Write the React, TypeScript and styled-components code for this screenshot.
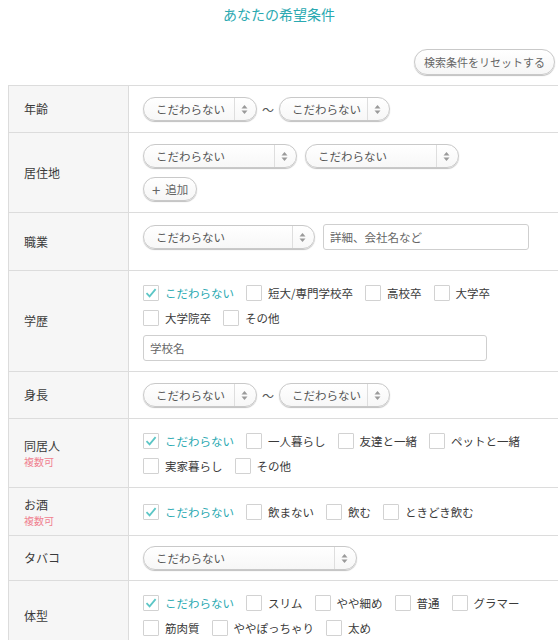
import React from 'react';
import styled, { createGlobalStyle } from 'styled-components';

const GlobalStyle = createGlobalStyle`
  html, body {
    margin: 0;
    padding: 0;
    background: #ffffff;
    overflow-x: hidden;
  }
  body {
    font-family: "Noto Sans CJK JP", "Noto Sans", sans-serif;
    color: #444;
  }
`;

const Page = styled.div`
  padding: 3px 0 0 8px;
`;

const Title = styled.h2`
  margin: 0;
  text-align: center;
  font-size: 14px;
  font-weight: 400;
  color: #2aa9b1;
  line-height: 22px;
  padding-right: 8px;
`;

const ResetRow = styled.div`
  display: flex;
  justify-content: flex-end;
  margin-top: 24px;
  padding-right: 3px;
`;

const PillButton = styled.button<{ $small?: boolean }>`
  font-family: inherit;
  font-size: ${(p) => (p.$small ? '11px' : '11.5px')};
  color: #666;
  background: linear-gradient(#ffffff, #f6f6f6);
  border: 1px solid #c9c9c9;
  border-radius: 14px;
  box-shadow: 0 1px 1px rgba(0, 0, 0, 0.25);
  height: ${(p) => (p.$small ? '26px' : '24px')};
  padding: 0 ${(p) => (p.$small ? '9px' : '8px')};
  display: inline-flex;
  align-items: center;
  gap: 5px;
  cursor: pointer;
`;

const Table = styled.div`
  margin-top: 10px;
  width: 600px;
  border-top: 1px solid #dcdcdc;
  border-left: 1px solid #dcdcdc;
`;

const Row = styled.div`
  display: grid;
  grid-template-columns: 120px 1fr;
  border-bottom: 1px solid #dcdcdc;
`;

const Label = styled.div`
  background: #f6f6f6;
  border-right: 1px solid #dcdcdc;
  padding: 7px 15px;
  display: flex;
  flex-direction: column;
  justify-content: center;
  font-size: 12px;
  color: #3a3a3a;
  line-height: 18px;
`;

const Note = styled.span`
  font-size: 10px;
  color: #f0808f;
  line-height: 14px;
`;

const Content = styled.div<{ $pt?: number; $pb?: number }>`
  padding: ${(p) => p.$pt ?? 11}px 15px ${(p) => p.$pb ?? 11}px 14px;
  display: flex;
  flex-direction: column;
  gap: 9px;
`;

const Line = styled.div`
  display: flex;
  align-items: center;
  gap: 8px;
`;

const Tilde = styled.span`
  font-size: 12px;
  color: #555;
  margin: 0 -3px;
`;

const SelectBox = styled.div<{ $w: number }>`
  width: ${(p) => p.$w}px;
  height: 24px;
  box-sizing: border-box;
  border: 1px solid #c9c9c9;
  border-radius: 13px;
  background: linear-gradient(#ffffff, #f7f7f7);
  box-shadow: 0 1px 1px rgba(0, 0, 0, 0.25);
  display: flex;
  align-items: stretch;
  font-size: 11.5px;
  color: #555;
`;

const SelectText = styled.span`
  flex: 1;
  display: flex;
  align-items: center;
  padding-left: 12px;
  white-space: nowrap;
`;

const SelectArrow = styled.span`
  width: 19px;
  border-left: 1px solid #dedede;
  display: flex;
  align-items: center;
  justify-content: center;
  padding-right: 2px;
`;

const TextInput = styled.input<{ $w: number }>`
  width: ${(p) => p.$w}px;
  height: 26px;
  box-sizing: border-box;
  border: 1px solid #cfcfcf;
  border-radius: 3px;
  font-family: inherit;
  font-size: 11.5px;
  padding: 0 6px;
  color: #555;
  &::placeholder {
    color: #666;
  }
`;

const CheckWrap = styled.div`
  display: flex;
  flex-wrap: wrap;
  column-gap: 12px;
  row-gap: 0;
  max-width: 400px;
`;

const CheckItem = styled.label<{ $on?: boolean }>`
  display: inline-flex;
  align-items: center;
  height: 25px;
  gap: 6px;
  font-size: 11.5px;
  color: ${(p) => (p.$on ? '#2aa9b1' : '#3a3a3a')};
`;

const Box = styled.span`
  width: 14px;
  height: 14px;
  border: 1px solid #d2d2d2;
  border-radius: 1px;
  background: #fff;
  display: inline-flex;
  align-items: center;
  justify-content: center;
`;

const Arrows = () => (
  <svg width="7" height="11" viewBox="0 0 7 11">
    <path d="M3.5 1 L6.5 4.5 L0.5 4.5 Z" fill="#9a9a9a" />
    <path d="M3.5 10 L6.5 6.5 L0.5 6.5 Z" fill="#9a9a9a" />
  </svg>
);

const Select = ({ w }: { w: number }) => (
  <SelectBox $w={w}>
    <SelectText>こだわらない</SelectText>
    <SelectArrow>
      <Arrows />
    </SelectArrow>
  </SelectBox>
);

const Check = ({ label, on }: { label: string; on?: boolean }) => (
  <CheckItem $on={on}>
    <Box>
      {on && (
        <svg width="12" height="10" viewBox="0 0 12 10">
          <path d="M1.5 5.2 L4.6 8.3 L10.6 1.2" fill="none" stroke="#5cc6c6" strokeWidth="1.8" />
        </svg>
      )}
    </Box>
    {label}
  </CheckItem>
);

const Checks = ({ items }: { items: string[] }) => (
  <CheckWrap>
    {items.map((it, i) => (
      <Check key={it} label={it} on={i === 0} />
    ))}
  </CheckWrap>
);

const App = () => {
  return (
    <>
      <GlobalStyle />
      <Page>
        <Title>あなたの希望条件</Title>
        <ResetRow>
          <PillButton $small>検索条件をリセットする</PillButton>
        </ResetRow>
        <Table>
          <Row>
            <Label>年齢</Label>
            <Content>
              <Line>
                <Select w={114} />
                <Tilde>〜</Tilde>
                <Select w={111} />
              </Line>
            </Content>
          </Row>
          <Row>
            <Label>居住地</Label>
            <Content>
              <Line>
                <Select w={154} />
                <Select w={154} />
              </Line>
              <Line>
                <PillButton>
                  <span style={{ fontSize: 15, lineHeight: 1 }}>+</span>追加
                </PillButton>
              </Line>
            </Content>
          </Row>
          <Row>
            <Label>職業</Label>
            <Content $pb={20}>
              <Line>
                <Select w={172} />
                <TextInput $w={206} placeholder="詳細、会社名など" />
              </Line>
            </Content>
          </Row>
          <Row>
            <Label>学歴</Label>
            <Content $pt={9} $pb={10}>
              <Checks items={['こだわらない', '短大/専門学校卒', '高校卒', '大学卒', '大学院卒', 'その他']} />
              <TextInput $w={344} placeholder="学校名" style={{ marginTop: -4 }} />
            </Content>
          </Row>
          <Row>
            <Label>身長</Label>
            <Content>
              <Line>
                <Select w={114} />
                <Tilde>〜</Tilde>
                <Select w={111} />
              </Line>
            </Content>
          </Row>
          <Row>
            <Label>
              同居人
              <Note>複数可</Note>
            </Label>
            <Content $pt={9} $pb={9}>
              <Checks items={['こだわらない', '一人暮らし', '友達と一緒', 'ペットと一緒', '実家暮らし', 'その他']} />
            </Content>
          </Row>
          <Row>
            <Label>
              お酒
              <Note>複数可</Note>
            </Label>
            <Content $pt={11} $pb={11}>
              <Checks items={['こだわらない', '飲まない', '飲む', 'ときどき飲む']} />
            </Content>
          </Row>
          <Row>
            <Label>タバコ</Label>
            <Content $pt={10} $pb={10}>
              <Line>
                <Select w={214} />
              </Line>
            </Content>
          </Row>
          <Row>
            <Label>体型</Label>
            <Content $pt={9}>
              <Checks items={['こだわらない', 'スリム', 'やや細め', '普通', 'グラマー', '筋肉質', 'ややぽっちゃり', '太め']} />
            </Content>
          </Row>
        </Table>
      </Page>
    </>
  );
};

export default App;
